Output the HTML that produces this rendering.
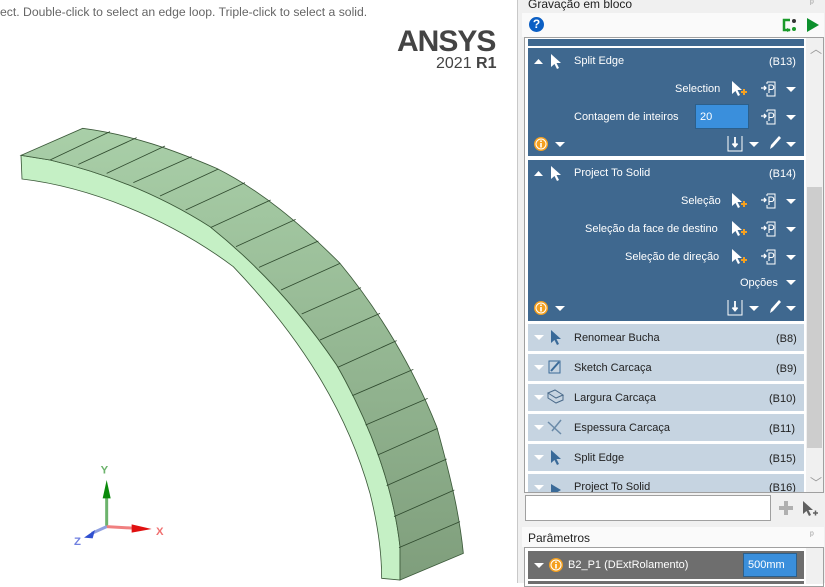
<!DOCTYPE html>
<html><head><meta charset="utf-8"><style>
*{margin:0;padding:0;box-sizing:border-box}
body{width:825px;height:583px;overflow:hidden;background:#fff;font-family:"Liberation Sans",Arial,sans-serif;position:relative}
.a{position:absolute}
.t{position:absolute;font-size:11px;color:#fff;white-space:nowrap}
.d{background:#3f688f}
.l{background:#c6d4e1}
.dk{color:#222}
</style></head><body>
<div class="a" style="left:0;top:5px;font-size:12.2px;color:#666">ect. Double-click to select an edge loop. Triple-click to select a solid.</div>
<div class="a" style="left:397px;top:25px;font-size:30px;font-weight:bold;color:#444;letter-spacing:-1px">ANSYS</div>
<div class="a" style="left:436px;top:55px;font-size:16px;color:#444">2021 <b>R1</b></div>

<svg class="a" style="left:0;top:110px" width="480" height="473" viewBox="0 0 1440 1419">
<defs><linearGradient id="g" x1="0" y1="0" x2="0" y2="1"><stop offset="0" stop-color="#a9cfa8"/><stop offset="1" stop-color="#7f9e7c"/></linearGradient></defs>
<path d="M63 136 L66 207 C260 230 500 320 700 470 C900 680 1040 900 1110 1150 C1135 1250 1145 1330 1145 1405 L1200 1410 L1200 1310 C1180 1130 1110 940 1010 765 C905 610 780 470 630 350 C480 255 320 190 150 150 Z" fill="#c5f0c5" stroke="#3c5a3a" stroke-width="2.5"/>
<path d="M63 136 L248 55 C400 75 520 120 650 175 C780 240 900 340 1020 460 C1140 605 1240 775 1310 950 C1360 1130 1380 1230 1390 1330 L1200 1410 L1200 1310 C1180 1130 1110 940 1010 765 C905 610 780 470 630 350 C480 255 320 190 150 150 Z" fill="url(#g)" stroke="#3c5a3a" stroke-width="2.5"/>
<g stroke="#2f4a2e" stroke-width="2.5">
<line x1="150" y1="150" x2="330" y2="65"/><line x1="235" y1="163" x2="410" y2="83"/><line x1="320" y1="190" x2="495" y2="108"/><line x1="400" y1="218" x2="575" y2="140"/><line x1="480" y1="258" x2="655" y2="177"/><line x1="557" y1="300" x2="735" y2="218"/><line x1="633" y1="352" x2="812" y2="270"/><line x1="708" y1="410" x2="887" y2="328"/><line x1="777" y1="472" x2="955" y2="393"/><line x1="843" y1="540" x2="1020" y2="460"/><line x1="905" y1="612" x2="1083" y2="533"/><line x1="960" y1="690" x2="1140" y2="610"/><line x1="1013" y1="772" x2="1190" y2="692"/><line x1="1057" y1="857" x2="1240" y2="778"/><line x1="1097" y1="945" x2="1283" y2="865"/><line x1="1133" y1="1035" x2="1313" y2="955"/><line x1="1160" y1="1127" x2="1340" y2="1047"/><line x1="1182" y1="1220" x2="1363" y2="1140"/><line x1="1197" y1="1313" x2="1380" y2="1235"/>
</g>
<line x1="320" y1="1250" x2="320" y2="1140" stroke="#6cb36c" stroke-width="9"/>
<path d="M308 1165 L320 1110 L332 1165 Z" fill="#0a8a0a"/>
<line x1="320" y1="1250" x2="410" y2="1255" stroke="#f08080" stroke-width="9"/>
<path d="M395 1243 L455 1257 L395 1268 Z" fill="#e01010"/>
<line x1="320" y1="1250" x2="275" y2="1270" stroke="#8fa0e0" stroke-width="9"/>
<path d="M285 1260 L252 1283 L278 1285 Z" fill="#3050d0"/>
<text x="302" y="1090" font-size="34" fill="#6cb36c" font-family="Liberation Sans" font-weight="bold">Y</text>
<text x="468" y="1275" font-size="34" fill="#f07070" font-family="Liberation Sans" font-weight="bold">X</text>
<text x="222" y="1305" font-size="34" fill="#7080e0" font-family="Liberation Sans" font-weight="bold">Z</text>
</svg>

<!-- panel -->
<div class="a" style="left:517px;top:0;width:308px;height:583px;background:#f0f0f0;border-left:1px solid #c8c8c8"></div>
<div class="a" style="left:528px;top:-3px;font-size:12px;color:#222">Gravação em bloco</div>
<div class="a" style="left:810px;top:-2px;font-size:10px;color:#999">ᵖ</div>
<div class="a" style="left:522px;top:13px;width:302px;height:24px;background:#fafafa"></div>
<div class="a" style="left:529px;top:17px;width:15px;height:15px;border-radius:50%;background:#0b5fc4;color:#fff;font-size:12px;font-weight:bold;text-align:center;line-height:15px">?</div>
<svg class="a" style="left:781px;top:17px" width="40" height="16"><path d="M9 3 H3 V13 H9" fill="none" stroke="#1a9a2a" stroke-width="2.5"/><path d="M6 11 L10 13 L6 15Z" fill="#1a9a2a"/><circle cx="13" cy="4" r="2" fill="#333"/><circle cx="13" cy="12" r="2" fill="#1a9a2a"/><path d="M26 1 L38 8 L26 15 Z" fill="#0c8f2c"/></svg>

<div class="a" style="left:524px;top:37px;width:300px;height:456px;background:#fff;border:1px solid #a0a0a0"></div>
<div class="a" style="left:806px;top:38px;width:17px;height:454px;background:#f0f0f0"></div>
<div class="a" style="left:807px;top:187px;width:15px;height:261px;background:#cdcdcd"></div>
<div class="a" style="left:810px;top:40px;font-size:12px;color:#999">︿</div>
<div class="a" style="left:810px;top:474px;font-size:12px;color:#999">﹀</div>

<div class="a d" style="left:528px;top:39px;width:276px;height:7px"></div>
<div class="a d" style="left:528px;top:48px;width:276px;height:108px"></div>
<div class="a d" style="left:528px;top:160px;width:276px;height:161px"></div>

<svg class="a" style="left:528px;top:48px" width="276" height="273">
<defs>
<path id="ar" d="M0 0 L0 13 L3.5 10 L6 15 L8 14 L5.5 9 L10 9 Z" fill="#fff"/>
<g id="cp"><use href="#ar"/><path d="M9 11 H15 M12 8 V14" stroke="#f4a020" stroke-width="2"/></g>
<g id="pp"><path d="M0 7 H5 M3 5 L5 7 L3 9" stroke="#fff" stroke-width="1.3" fill="none"/><path d="M6 1 H14 V15 H6 V12 M6 3 V1" fill="none" stroke="#fff" stroke-width="1"/><path d="M8 12 V4 H10.5 A2 2 0 0 1 10.5 8.5 H8" fill="none" stroke="#fff" stroke-width="1.1"/></g>
<path id="dn" d="M0 0 H10 L5 5 Z" fill="#fff"/>
<path id="up" d="M0 5 H9 L4.5 0 Z" fill="#fff"/>
<g id="inf"><circle cx="7" cy="7" r="7" fill="#f4a020"/><circle cx="7" cy="7" r="5.5" fill="#fff"/><circle cx="7" cy="7" r="4.5" fill="#f4a020"/><rect x="6.2" y="6" width="1.6" height="4.5" fill="#fff"/><rect x="6.2" y="3.5" width="1.6" height="1.5" fill="#fff"/></g>
<g id="bar"><path d="M0 1 V16 H14 V1" fill="none" stroke="#fff" stroke-width="1"/><path d="M7 2 V11 M4.5 8.5 L7 11.5 L9.5 8.5" stroke="#fff" stroke-width="1.8" fill="none"/></g>
<path id="pen" d="M1 14 L2 10 L10 1 L12 3 L4 12 Z" fill="#fff"/>
</defs>
<use href="#up" x="6" y="11"/><use href="#ar" x="23" y="6"/>
<use href="#cp" x="204" y="33"/><use href="#pp" x="233" y="33"/><use href="#dn" x="258" y="39"/>
<use href="#pp" x="233" y="61"/><use href="#dn" x="258" y="67"/>
<use href="#inf" x="6" y="89"/><use href="#dn" x="27" y="94"/>
<use href="#bar" x="200" y="87"/><use href="#dn" x="221" y="94"/><use href="#pen" x="241" y="87"/><use href="#dn" x="258" y="94"/>

<g transform="translate(0,112)">
<use href="#up" x="6" y="11"/><use href="#ar" x="23" y="6"/>
<use href="#cp" x="204" y="33"/><use href="#pp" x="233" y="33"/><use href="#dn" x="258" y="39"/>
<use href="#cp" x="204" y="61"/><use href="#pp" x="233" y="61"/><use href="#dn" x="258" y="67"/>
<use href="#cp" x="204" y="89"/><use href="#pp" x="233" y="89"/><use href="#dn" x="258" y="95"/>
<use href="#dn" x="258" y="120"/>
<use href="#inf" x="6" y="141"/><use href="#dn" x="27" y="146"/>
<use href="#bar" x="200" y="139"/><use href="#dn" x="221" y="146"/><use href="#pen" x="241" y="139"/><use href="#dn" x="258" y="146"/>
</g>
</svg>

<div class="t" style="left:574px;top:55px">Split Edge</div>
<div class="t" style="left:769px;top:56px">(B13)</div>
<div class="t" style="left:675px;top:83px">Selection</div>
<div class="t" style="left:574px;top:111px">Contagem de inteiros</div>
<div class="a" style="left:695px;top:104px;width:54px;height:25px;background:#3a8fdc;border:1px solid #2c5f8a;color:#fff;font-size:11px;padding:6px 4px">20</div>

<div class="t" style="left:574px;top:167px">Project To Solid</div>
<div class="t" style="left:769px;top:168px">(B14)</div>
<div class="t" style="left:681px;top:195px">Seleção</div>
<div class="t" style="left:585px;top:223px">Seleção da face de destino</div>
<div class="t" style="left:625px;top:251px">Seleção de direção</div>
<div class="t" style="left:740px;top:277px">Opções</div>

<div class="a l" style="left:528px;top:324px;width:276px;height:27px"></div>
<div class="a l" style="left:528px;top:354px;width:276px;height:27px"></div>
<div class="a l" style="left:528px;top:384px;width:276px;height:27px"></div>
<div class="a l" style="left:528px;top:414px;width:276px;height:27px"></div>
<div class="a l" style="left:528px;top:444px;width:276px;height:27px"></div>
<div class="a l" style="left:528px;top:474px;width:276px;height:18px"></div>
<svg class="a" style="left:528px;top:324px" width="276" height="168">
<g fill="#fff"><path d="M6 11 H16 L11 16Z"/><path d="M6 41 H16 L11 46Z"/><path d="M6 71 H16 L11 76Z"/><path d="M6 101 H16 L11 106Z"/><path d="M6 131 H16 L11 136Z"/><path d="M6 161 H16 L11 166Z"/></g>
<path d="M23 6 L23 19 L26.5 16 L29 21 L31 20 L28.5 15 L33 15 Z" fill="#3a6a98"/>
<path d="M23 126 L23 139 L26.5 136 L29 141 L31 140 L28.5 135 L33 135 Z" fill="#3a6a98"/>
<path d="M23 160 L33 166 L23 172 Z" fill="#3a6a98"/>
<rect x="21" y="37" width="11" height="12" fill="none" stroke="#3a6a98"/><path d="M23 47 L31 38" stroke="#3a6a98" stroke-width="2"/>
<path d="M20 69 L27 66 L35 71 L28 74 Z M20 69 V74 L28 79 L35 76 V71" fill="none" stroke="#4a6a8a"/>
<path d="M20 98 L33 110 M24 107 L33 96" stroke="#6a8aa8" stroke-width="1.5"/>
</svg>
<div class="t dk" style="left:574px;top:332px">Renomear Bucha</div><div class="t dk" style="left:776px;top:333px">(B8)</div>
<div class="t dk" style="left:574px;top:362px">Sketch Carcaça</div><div class="t dk" style="left:776px;top:363px">(B9)</div>
<div class="t dk" style="left:574px;top:392px">Largura Carcaça</div><div class="t dk" style="left:769px;top:393px">(B10)</div>
<div class="t dk" style="left:574px;top:422px">Espessura Carcaça</div><div class="t dk" style="left:769px;top:423px">(B11)</div>
<div class="t dk" style="left:574px;top:452px">Split Edge</div><div class="t dk" style="left:769px;top:453px">(B15)</div>
<div class="a" style="left:528px;top:474px;width:276px;height:18px;overflow:hidden"><div class="t dk" style="left:46px;top:7px">Project To Solid</div><div class="t dk" style="left:241px;top:8px">(B16)</div></div>

<div class="a" style="left:525px;top:495px;width:246px;height:26px;background:#fff;border:1px solid #a0a0a0"></div>
<svg class="a" style="left:776px;top:498px" width="45" height="22"><path d="M3 10 H17 M10 3 V17" stroke="#b0b0b0" stroke-width="4"/><path d="M27 3 L27 16 L30.5 13 L33 18 L35 17 L32.5 12 L37 12 Z" fill="#606060"/><path d="M37 15 H42 M39.5 12.5 V17.5" stroke="#606060" stroke-width="1.5"/></svg>

<div class="a" style="left:522px;top:527px;width:302px;height:20px;background:#fafafa"></div>
<div class="a" style="left:528px;top:531px;font-size:12px;color:#222">Parâmetros</div>
<div class="a" style="left:810px;top:530px;font-size:10px;color:#999">ᵖ</div>
<div class="a" style="left:524px;top:547px;width:300px;height:40px;background:#fff;border:1px solid #a0a0a0"></div>
<div class="a" style="left:806px;top:548px;width:17px;height:36px;background:#f0f0f0"></div>
<div class="a" style="left:528px;top:551px;width:276px;height:28px;background:#6e6e6e"></div>
<div class="a" style="left:528px;top:581px;width:276px;height:3px;background:#6e6e6e"></div>
<svg class="a" style="left:528px;top:551px" width="40" height="28"><path d="M6 12 H16 L11 17Z" fill="#fff"/><circle cx="28" cy="14" r="7" fill="#f4a020"/><circle cx="28" cy="14" r="5.5" fill="#fff"/><circle cx="28" cy="14" r="4.5" fill="#f4a020"/><rect x="27.2" y="13" width="1.6" height="4.5" fill="#fff"/><rect x="27.2" y="10.5" width="1.6" height="1.5" fill="#fff"/></svg>
<div class="t" style="left:568px;top:559px">B2_P1 (DExtRolamento)</div>
<div class="a" style="left:743px;top:553px;width:54px;height:24px;background:#3a8fdc;border:1px solid #2c5f8a;color:#fff;font-size:11px;padding:5px 4px">500mm</div>
</body></html>
